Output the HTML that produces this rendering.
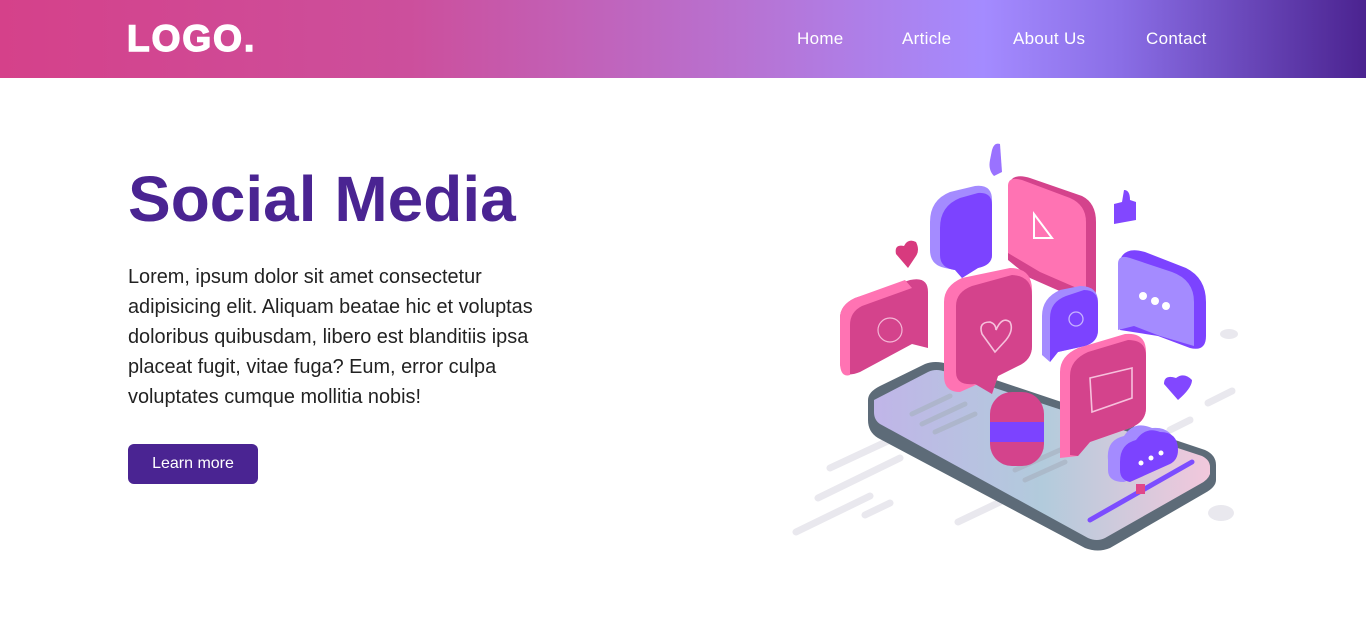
<!DOCTYPE html>
<html><head><meta charset="utf-8"><style>
*{margin:0;padding:0;box-sizing:border-box}
body{width:1366px;height:625px;background:#fff;font-family:"Liberation Sans",sans-serif;overflow:hidden;position:relative}
header{position:absolute;left:0;top:0;width:1366px;height:78px;background:linear-gradient(90deg,#d5418a 0%,#cc4f9c 30%,#b773d3 55%,#a48bff 72%,#8a6ee6 82%,#4b2390 100%)}
.logo{position:absolute;left:127px;top:19px;color:#fff;font-weight:bold;font-size:37px;letter-spacing:2px;line-height:40px;-webkit-text-stroke:1.5px #fff}
nav a{position:absolute;top:29px;color:#fff;font-size:17px;text-decoration:none;letter-spacing:.3px}
h1{position:absolute;left:128px;top:163px;color:#4a2492;font-size:64px;font-weight:bold;line-height:72px}
p{position:absolute;left:128px;top:262px;width:440px;color:#222;font-size:19.9px;line-height:30px}
.btn{position:absolute;left:128px;top:444px;width:130px;height:40px;background:#4a2492;color:#fff;border-radius:6px;font-size:16px;text-align:center;line-height:40px}
svg{position:absolute;left:0;top:0}
</style></head><body>
<header><div class="logo">LOGO.</div>
<nav><a style="left:797px">Home</a><a style="left:902px">Article</a><a style="left:1013px">About Us</a><a style="left:1146px">Contact</a></nav></header>
<h1>Social Media</h1>
<p>Lorem, ipsum dolor sit amet consectetur adipisicing elit. Aliquam beatae hic et voluptas doloribus quibusdam, libero est blanditiis ipsa placeat fugit, vitae fuga? Eum, error culpa voluptates cumque mollitia nobis!</p>
<div class="btn">Learn more</div>
<svg width="1366" height="625" viewBox="0 0 1366 625">
<defs><linearGradient id="sc" x1="0" x2="1"><stop offset="0" stop-color="#c0b5e8"/><stop offset=".5" stop-color="#b2cbdc"/><stop offset="1" stop-color="#f2c8dc"/></linearGradient></defs>
<g stroke="#e9e8ee" stroke-width="7" stroke-linecap="round">
<line x1="830" y1="468" x2="890" y2="440"/><line x1="818" y1="498" x2="900" y2="458"/><line x1="796" y1="532" x2="870" y2="496"/><line x1="865" y1="515" x2="890" y2="503"/><line x1="958" y1="522" x2="1000" y2="502"/><line x1="1208" y1="403" x2="1232" y2="391"/><line x1="1170" y1="430" x2="1190" y2="420"/></g>
<ellipse cx="1229" cy="334" rx="9" ry="5" fill="#e9e8ee"/><ellipse cx="1221" cy="513" rx="13" ry="8" fill="#e9e8ee"/>
<path d="M868 400 Q868 392 880 386 L925 364 Q935 360 948 364 L1205 450 Q1216 455 1216 465 L1216 480 Q1216 487 1205 493 L1110 548 Q1098 553 1085 548 L878 438 Q868 432 868 420 Z" fill="#5d6b78"/>
<path d="M874 400 L928 372 Q936 368 946 372 L1202 456 Q1210 460 1210 467 L1210 474 Q1208 480 1200 484 L1105 538 Q1097 542 1088 538 L880 424 Q874 420 874 412 Z" fill="url(#sc)"/>
<g stroke="#a9b3c3" stroke-width="5" stroke-linecap="round" opacity=".7"><line x1="912" y1="414" x2="950" y2="396"/><line x1="922" y1="424" x2="965" y2="404"/><line x1="935" y1="432" x2="975" y2="414"/><line x1="1015" y1="470" x2="1060" y2="450"/><line x1="1025" y1="480" x2="1065" y2="462"/></g>
<line x1="1090" y1="520" x2="1192" y2="462" stroke="#7c4dff" stroke-width="5" stroke-linecap="round"/>
<rect x="1136" y="484" width="9" height="10" fill="#e0478a"/>
<path d="M840 318 Q840 305 855 298 L910 280 Q928 276 928 292 L928 348 L912 344 L860 372 Q840 380 840 362 Z" fill="#d4438c"/><path d="M840 318 Q840 305 855 298 L905 280 L912 288 L862 306 Q850 312 850 325 L850 375 Q840 378 840 362Z" fill="#ff73b3"/>
<circle cx="890" cy="330" r="12" fill="none" stroke="#f4b6d6" stroke-width="1.2"/>
<path d="M930 222 Q930 200 950 192 L975 186 Q992 184 992 200 L992 255 Q992 265 978 268 L962 278 L955 270 L945 268 Q930 265 930 250 Z" fill="#a48bff"/><path d="M940 228 Q940 206 960 198 L978 193 Q992 192 992 205 L992 255 Q992 265 978 268 L962 278 L955 270 Q940 268 940 255 Z" fill="#7c43ff"/>
<path d="M1008 186 Q1012 172 1030 178 L1082 196 Q1096 203 1096 222 L1096 290 Q1096 305 1080 300 L1030 278 L1008 260 Z" fill="#d4438c"/><path d="M1008 186 Q1008 176 1022 180 L1070 198 Q1086 205 1086 222 L1086 292 L1040 272 L1008 253 Z" fill="#ff73b3"/>
<path d="M1034 214 L1052 238 L1034 238 Z" fill="none" stroke="#fff" stroke-width="2"/>
<path d="M944 302 Q944 286 962 278 L1010 268 Q1032 268 1032 290 L1032 346 Q1032 360 1018 366 L998 376 L992 394 L978 384 L960 392 Q944 392 944 376 Z" fill="#ff73b3"/><path d="M956 306 Q956 292 972 286 L1012 275 Q1032 276 1032 296 L1032 346 Q1032 360 1018 366 L998 376 L992 394 L975 384 Q956 386 956 372 Z" fill="#d4438c"/>
<path d="M995 352 L982 334 Q978 322 990 322 Q996 324 996 330 Q1002 316 1010 322 Q1014 330 1006 340 Z" fill="none" stroke="#f6c0dc" stroke-width="1.6"/>
<path d="M1042 316 Q1042 298 1060 290 L1080 286 Q1098 286 1098 302 L1098 330 Q1098 342 1085 346 L1058 352 L1050 362 L1042 355 Z" fill="#a48bff"/><path d="M1050 318 Q1050 302 1066 296 L1084 290 Q1098 290 1098 304 L1098 330 Q1098 342 1085 346 L1058 352 L1050 362 Z" fill="#7c43ff"/>
<circle cx="1076" cy="319" r="7" fill="none" stroke="#c7b3ff" stroke-width="1.3"/>
<path d="M1120 260 Q1125 246 1145 252 L1186 268 Q1206 278 1206 302 L1206 336 Q1206 352 1190 348 L1158 336 L1120 330 Z" fill="#7c43ff"/><path d="M1118 264 Q1118 254 1130 258 L1172 272 Q1194 280 1194 302 L1194 346 L1160 336 L1134 326 L1118 330 Z" fill="#a48bff"/>
<circle cx="1143" cy="296" r="4" fill="#fff"/><circle cx="1155" cy="301" r="4" fill="#fff"/><circle cx="1166" cy="306" r="4" fill="#fff"/>
<rect x="990" y="392" width="54" height="74" rx="22" fill="#d4438c"/><rect x="990" y="422" width="54" height="20" fill="#7c43ff"/>
<path d="M1060 372 Q1060 356 1078 348 L1125 334 Q1146 332 1146 352 L1146 408 Q1146 422 1130 428 L1090 442 L1078 456 L1060 458 Z" fill="#ff73b3"/><path d="M1070 376 Q1070 360 1088 352 L1128 340 Q1146 340 1146 356 L1146 408 Q1146 422 1130 428 L1090 442 L1078 456 L1070 455 Z" fill="#d4438c"/>
<path d="M1090 378 L1132 368 L1132 398 L1092 412 Z" fill="none" stroke="#f6c0dc" stroke-width="1.6"/>
<path d="M1108 460 Q1106 440 1124 436 Q1134 420 1152 428 Q1172 426 1176 446 Q1178 458 1168 464 L1124 482 Q1108 482 1108 470 Z" fill="#a48bff"/><path d="M1120 462 Q1120 444 1136 440 Q1146 426 1160 432 Q1178 432 1178 450 Q1178 460 1170 464 L1130 482 Q1120 480 1120 470 Z" fill="#7c43ff"/>
<circle cx="1141" cy="463" r="2.5" fill="#fff"/><circle cx="1151" cy="458" r="2.5" fill="#fff"/><circle cx="1161" cy="453" r="2.5" fill="#fff"/>
<path d="M908 268 L896 254 Q894 244 904 246 Q908 238 916 242 Q920 250 916 256 Z" fill="#d83a7e"/>
<path d="M1178 400 L1164 384 Q1164 374 1176 378 Q1184 372 1192 380 Q1192 388 1178 400Z" fill="#8247ff"/>
<path d="M1114 204 L1122 202 L1124 190 Q1130 190 1130 200 L1136 202 L1136 220 L1114 224 Z" fill="#8247ff"/>
<path d="M990 160 L992 150 Q994 142 1000 144 L1002 172 L994 176 Q988 170 990 160Z" fill="#9a72ff"/>
</svg>
</body></html>
